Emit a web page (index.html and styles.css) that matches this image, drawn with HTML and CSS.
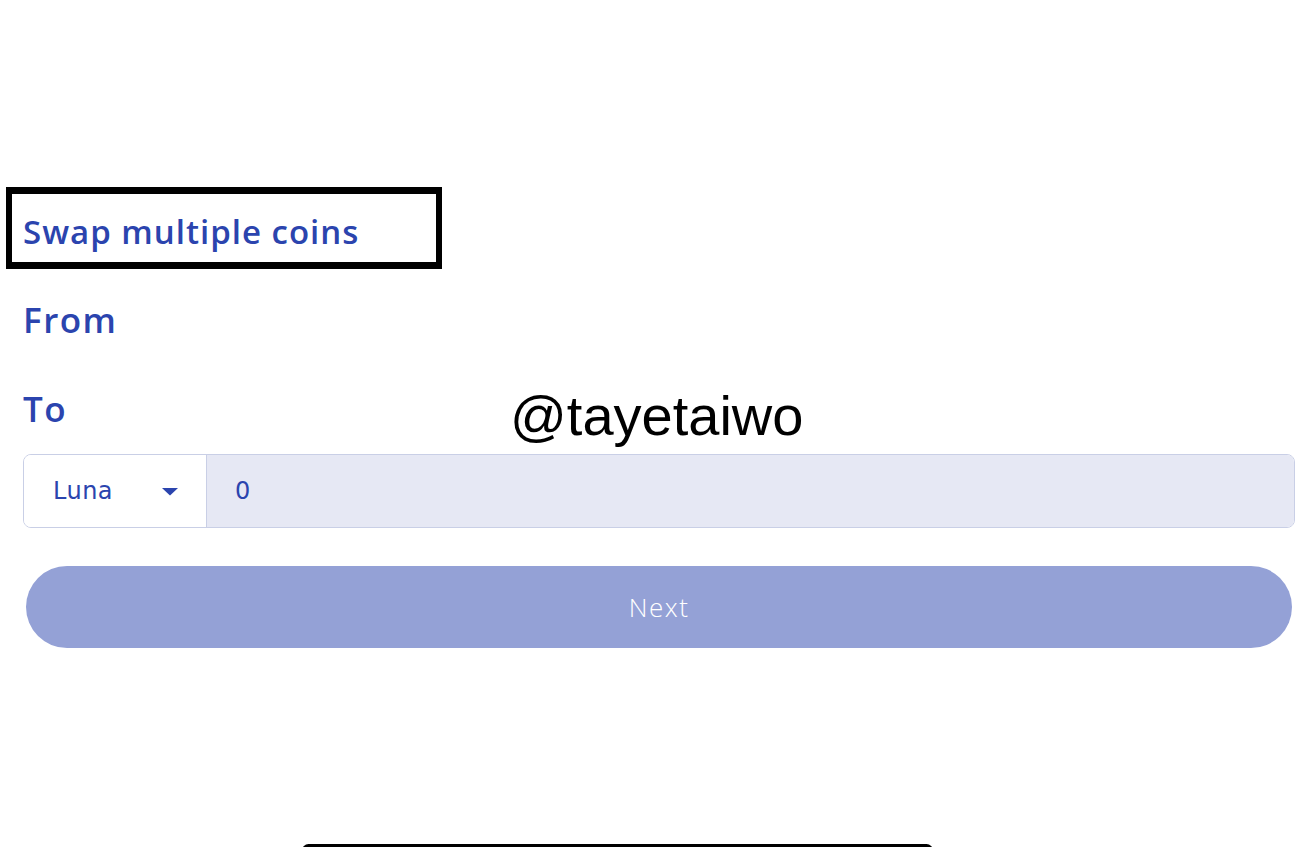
FILE: index.html
```html
<!DOCTYPE html>
<html lang="en">
<head>
<meta charset="utf-8">
<title>Swap multiple coins</title>
<link rel="stylesheet" href="styles.css">
</head>
<body>
<main class="page">
  <div class="title-box">
    <h1 class="title">Swap multiple coins</h1>
  </div>
  <div class="label label-from">From</div>
  <div class="label label-to">To</div>
  <div class="swap-row">
    <div class="coin-select">
      <span class="coin-name">Luna</span>
      <svg class="caret" width="16" height="8" viewBox="0 0 16 8"><path d="M0 0H16L8 7.5Z" fill="#2b44ae"/></svg>
    </div>
    <div class="amount">0</div>
  </div>
  <button class="next-btn">Next</button>
</main>
<div class="watermark">@tayetaiwo</div>
<div class="home-indicator"></div>
</body>
</html>
```
FILE: styles.css
```css
html, body {
  margin: 0;
  padding: 0;
  background: #ffffff;
}
body {
  position: relative;
  height: 847px;
  overflow: hidden;
  font-family: "Open Sans", "Noto Sans", sans-serif;
  color: #2b44ae;
}
.page {
  display: flex;
  flex-direction: column;
  padding: 187px 16px 0 23px;
}
.title-box {
  box-sizing: border-box;
  width: 436px;
  margin-left: -17px;
  border-style: solid;
  border-color: #000;
  border-width: 7px 6px 7px 6px;
  padding: 18px 0 10px 11px;
}
.title {
  margin: 0;
  font-size: 33px;
  line-height: 40px;
  font-weight: 600;
  letter-spacing: 1px;
  color: #2b44ae;
}
.label {
  font-size: 35px;
  line-height: 42px;
  font-weight: 600;
  letter-spacing: 1.5px;
  color: #2b44ae;
}
.label-from {
  margin-top: 30px;
}
.label-to {
  margin-top: 47px;
}
.swap-row {
  display: flex;
  margin-top: 24px;
  height: 74px;
  box-sizing: border-box;
  border: 1px solid #c9cfe6;
  border-radius: 8px;
  overflow: hidden;
}
.coin-select {
  box-sizing: border-box;
  width: 183px;
  display: flex;
  align-items: center;
  justify-content: space-between;
  padding: 0 28px 0 29px;
  background: #fff;
  border-right: 1px solid #c9cfe6;
}
.coin-name,
.amount {
  font-family: "DejaVu Sans", "Noto Sans", sans-serif;
  font-size: 24px;
  color: #2b44ae;
}
.coin-name {
  letter-spacing: 0.5px;
}
.caret {
  display: block;
  margin-top: 1px;
}
.amount {
  flex: 1;
  display: flex;
  align-items: center;
  padding-left: 28px;
  background: #e6e8f4;
}
.next-btn {
  margin: 38px 3px 0 3px;
  height: 82px;
  border: none;
  border-radius: 41px;
  background: #94a1d6;
  color: #ffffff;
  font-family: "Open Sans", "Noto Sans", sans-serif;
  font-size: 26px;
  font-weight: 300;
  letter-spacing: 1.5px;
}
.watermark {
  position: absolute;
  left: 510px;
  top: 384px;
  font-family: "Liberation Sans", Arial, sans-serif;
  font-size: 56px;
  line-height: 64px;
  color: #000;
}
.home-indicator {
  position: absolute;
  left: 302px;
  width: 631px;
  bottom: -10px;
  height: 13px;
  background: #000;
  border-radius: 7px;
}
```
